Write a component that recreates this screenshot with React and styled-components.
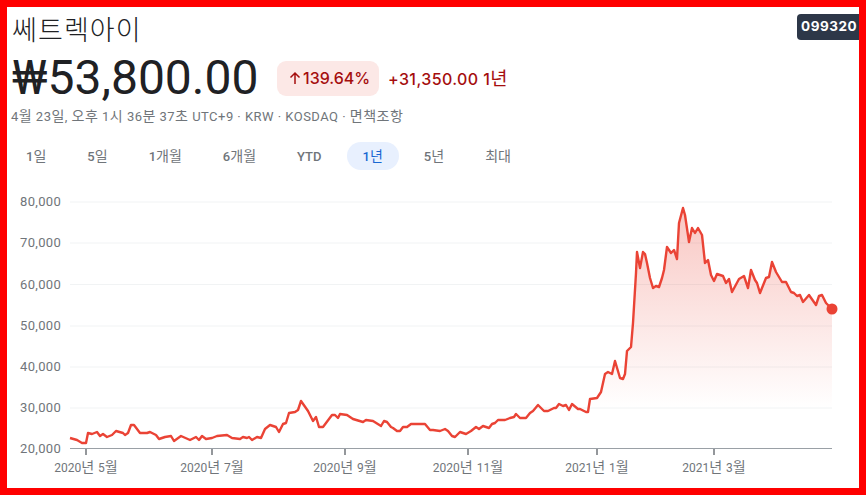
import React from 'react';
import styled, { createGlobalStyle } from 'styled-components';

const KR = '"Noto Sans CJK KR", sans-serif';

const COLORS = {
    frame: '#ff0000',
    ink: '#202124',
    muted: '#70757a',
    down: '#a50e0e',
    downBg: '#fce8e6',
    line: '#ea4335',
    grid: '#f1f3f4',
    axis: '#9aa0a6',
    active: '#1967d2',
    activeBg: '#e8f0fe',
    badge: '#2d3748'
};

const GlobalStyle = createGlobalStyle`
    html, body {
        margin: 0;
        padding: 0;
        background: #fff;
    }
`;

const hangulFont = `
    font-family: ${KR};
    font-weight: 400;
    line-height: 1;
`;

const Styles = {
    Page: styled.div`
        box-sizing: border-box;
        width: 866px;
        height: 495px;
        border: 7px solid ${COLORS.frame};
        overflow: hidden;
        background: #fff;
        font-family: Roboto, ${KR};
        color: ${COLORS.ink};
    `,
    Hangul: styled.span`
        ${hangulFont}
        font-size: 1.08em;
    `,
    LargeHangul: styled.span`
        ${hangulFont}
        font-size: 1.17em;
    `,
    ChartHangul: styled.tspan`
        ${hangulFont}
        font-size: 1.17em;
    `,
    Header: styled.div`
        display: flex;
        justify-content: space-between;
        align-items: flex-start;
        height: 46px;
    `,
    Name: styled.div`
        margin: 1px 0 0 5px;
        font-family: ${KR};
        font-size: 27px;
        font-weight: 300;
        line-height: 42px;
        letter-spacing: 1.1px;
    `,
    Ticker: styled.div`
        margin-top: 7px;
        padding: 0 2px 0 4px;
        height: 26px;
        border-radius: 4px 0 0 4px;
        background: ${COLORS.badge};
        color: #fff;
        font-family: Inter, sans-serif;
        font-size: 13.5px;
        font-weight: 700;
        line-height: 25px;
        letter-spacing: 0.5px;
    `,
    PriceRow: styled.div`
        display: flex;
        align-items: center;
        height: 50px;
        padding-left: 5px;
    `,
    Price: styled.div`
        font-size: 48px;
        font-weight: 400;
        line-height: 50px;
        width: 265px;
    `,
    Chip: styled.div`
        display: flex;
        align-items: center;
        box-sizing: border-box;
        width: 102px;
        height: 35px;
        padding-left: 10px;
        border-radius: 9px;
        background: ${COLORS.downBg};
        color: ${COLORS.down};
        font-family: Inter, ${KR};
        font-size: 16px;
        font-weight: 500;
    `,
    Change: styled.div`
        margin-left: 9px;
        color: ${COLORS.down};
        font-family: Inter, ${KR};
        font-size: 16px;
        font-weight: 500;
        letter-spacing: 0.4px;
    `,
    Meta: styled.div`
        margin: 4px 0 0 4px;
        color: ${COLORS.muted};
        font-size: 13px;
        line-height: 20px;
        letter-spacing: 0.47px;
    `,
    Tabs: styled.div`
        display: flex;
        gap: 9px;
        margin: 15px 0 20px 3px;
    `,
    Tab: styled.div`
        height: 28px;
        padding: 0 16px;
        border-radius: 14px;
        background: ${({ $active }) => ($active ? COLORS.activeBg : 'transparent')};
        color: ${({ $active }) => ($active ? COLORS.active : COLORS.muted)};
        font-size: 13px;
        font-weight: 500;
        line-height: 30px;
    `,
    Chart: styled.svg`
        display: block;
        font-family: Roboto, ${KR};
        font-size: 13px;
    `
};

const TABS = ['1일', '5일', '1개월', '6개월', 'YTD', '1년', '5년', '최대'];

const Y_TICKS = [
    ['80,000', 202],
    ['70,000', 243],
    ['60,000', 284.5],
    ['50,000', 326],
    ['40,000', 367],
    ['30,000', 408]
];

const X_TICKS = [
    ['2020년 5월', 86],
    ['2020년 7월', 212],
    ['2020년 9월', 345],
    ['2020년 11월', 468],
    ['2021년 1월', 597],
    ['2021년 3월', 714]
];

const PRICES = `70,438 77,440 82,443 86,443 88,433 92,434 97,432 100,436 103,434 107,437 112,435 116,431
123,433 125,435 128,433 131,425 134,425 140,433 147,433 150,432 156,435 159,439 165,437 171,436 174,441
181,436 190,440 196,437 199,440 202,436 206,439 212,438 217,436 227,435 232,438 240,439 243,437 247,438
249,437 252,440 257,437 261,438 265,429 270,425 276,427 279,432 283,424 286,423 289,413 295,412 298,410
301,401 308,411 313,421 316,417 319,427 323,427 332,415 335,415 338,418 340,414 347,415 353,419 363,422
366,420 373,421 381,426 384,421 387,422 391,427 393,428 397,431 400,431 403,427 407,427 411,424 425,424
430,430 433,430 440,431 445,429 448,431 452,436 455,437 460,432 466,434 471,431 476,427 479,429 483,426
489,428 492,424 495,423 498,420 505,420 510,418 514,417 516,414 520,418 526,418 530,413 533,411 538,405
544,411 548,411 554,408 556,408 559,404 563,406 566,405 569,410 572,404 578,409 580,409 586,412 588,412
590,399 597,398 601,392 605,374 608,372 612,374 615,361 620,378 623,379 625,374 627,351 631,347 633,323
636,273 637,252 640,268 643,252 645,254 647,263 650,278 653,288 656,286 659,287 662,278 664,270 667,247
671,253 674,250 677,259 679,223 683,208 685,215 689,242 692,228 695,233 698,228 702,235 705,263 708,260
711,275 714,281 717,274 723,276 726,283 729,279 732,292 739,279 744,276 748,288 751,270 755,280 757,283
760,293 766,278 769,277 772,262 776,272 782,282 786,282 788,286 791,292 794,293 797,296 800,295 803,302
809,295 816,305 819,296 822,295 826,303 832,309`.split(/\s+/).join(' ');

const withHangul = (text, Wrap) =>
    text.split(/([\uac00-\ud7a3]+)/).map((part, i) =>
        i % 2 ? <Wrap key={i}>{part}</Wrap> : part
    );

const ArrowUp = () => (
    <svg width="16" height="16" viewBox="0 0 16 16" fill="none" stroke={COLORS.down} strokeWidth="1.5">
        <path d="M8 14V3M3.5 7.5L8 3l4.5 4.5" />
    </svg>
);

const PriceChart = () => (
    <Styles.Chart width="852" height="290" viewBox="7 190 852 290">
        <defs>
            <linearGradient id="area" gradientUnits="userSpaceOnUse" x1="0" y1="208" x2="0" y2="408">
                <stop offset="0" stopColor={COLORS.line} stopOpacity="0.3" />
                <stop offset="1" stopColor={COLORS.line} stopOpacity="0" />
            </linearGradient>
        </defs>
        {Y_TICKS.map(([label, y]) => (
            <g key={label}>
                <line x1="70" x2="832" y1={y} y2={y} stroke={COLORS.grid} />
                <text x="61" y={y + 4} textAnchor="end" fill={COLORS.muted} letterSpacing="0.3">{label}</text>
            </g>
        ))}
        <text x="61" y="453" textAnchor="end" fill={COLORS.muted} letterSpacing="0.3">20,000</text>
        <polygon points={`${PRICES} 832,408 70,408`} fill="url(#area)" />
        <line x1="70" x2="832" y1="448.5" y2="448.5" stroke={COLORS.axis} />
        {X_TICKS.map(([label, x]) => (
            <g key={label}>
                <line x1={x} x2={x} y1="449" y2="455" stroke={COLORS.muted} strokeWidth="1.5" />
                <text x={x} y="472" textAnchor="middle" fill={COLORS.muted} fontSize="12" wordSpacing="1">
                    {withHangul(label, Styles.ChartHangul)}
                </text>
            </g>
        ))}
        <polyline points={PRICES} fill="none" stroke={COLORS.line} strokeWidth="2.4" strokeLinejoin="round" />
        <circle cx="832" cy="309" r="5.5" fill={COLORS.line} />
    </Styles.Chart>
);

const App = () => (
    <Styles.Page>
        <GlobalStyle />
        <Styles.Header>
            <Styles.Name>쎄트렉아이</Styles.Name>
            <Styles.Ticker>099320</Styles.Ticker>
        </Styles.Header>
        <Styles.PriceRow>
            <Styles.Price>₩53,800.00</Styles.Price>
            <Styles.Chip><ArrowUp />139.64%</Styles.Chip>
            <Styles.Change>{withHangul('+31,350.00 1년', Styles.LargeHangul)}</Styles.Change>
        </Styles.PriceRow>
        <Styles.Meta>
            {withHangul('4월 23일, 오후 1시 36분 37초 UTC+9 · KRW · KOSDAQ · 면책조항', Styles.Hangul)}
        </Styles.Meta>
        <Styles.Tabs>
            {TABS.map((tab) => (
                <Styles.Tab key={tab} $active={tab === '1년'}>{withHangul(tab, Styles.Hangul)}</Styles.Tab>
            ))}
        </Styles.Tabs>
        <PriceChart />
    </Styles.Page>
);

export default App;
